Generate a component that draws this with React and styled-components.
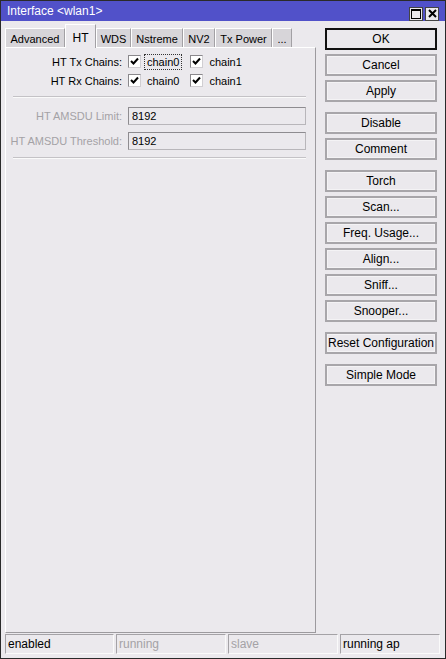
import React from 'react'
import styled, { createGlobalStyle } from 'styled-components'

const GlobalStyle = createGlobalStyle`
    html, body {
        margin: 0;
        padding: 0;
        background: #ebe9ed;
    }
    * {
        box-sizing: border-box;
    }
`

const Window = styled.div`
    width: 446px;
    height: 659px;
    display: flex;
    flex-direction: column;
    background: #ebe9ed;
    border: 1px solid #2a2a2a;
    font-family: "Liberation Sans", Arial, sans-serif;
    font-size: 11px;
    color: #000;
`

const TitleBar = styled.div`
    height: 20px;
    flex: none;
    display: flex;
    align-items: center;
    justify-content: space-between;
    padding: 0 6px 0 6px;
    background: #5151c9;
    color: #fff;
    font-size: 12px;
`

const TitleButtons = styled.div`
    display: flex;
    gap: 2px;
    padding-top: 5px;
`

const TitleButton = styled.div`
    width: 14px;
    height: 14px;
    display: flex;
    align-items: center;
    justify-content: center;
    background: #ebe9ed;
    border: 1px solid #444;
`

const Main = styled.div`
    flex: 1;
    display: flex;
    min-height: 0;
`

const LeftColumn = styled.div`
    width: 315px;
    display: flex;
    flex-direction: column;
    padding: 3px 0 0 4px;
`

const TabRow = styled.div`
    display: flex;
    align-items: flex-end;
    height: 23px;
    position: relative;
    z-index: 1;
`

const Tab = styled.div`
    height: ${p => (p.$active ? '24px' : '19px')};
    margin-bottom: ${p => (p.$active ? '-1px' : '0')};
    padding: ${p => (p.$active ? '3px 0 0' : '1px 0 0')};
    width: ${p => p.$w}px;
    display: flex;
    align-items: center;
    justify-content: center;
    background: ${p => (p.$active ? '#ebe9ed' : '#d7d5d9')};
    border-top: 1px solid #fff;
    border-left: 1px solid #fff;
    border-right: 1px solid #a2a0a4;
    font-size: ${p => (p.$active ? '12px' : '11px')};
`

const Panel = styled.div`
    flex: 1;
    border: 1px solid;
    border-color: #fff #9c9a9e #9c9a9e #fff;
    padding: 4px 0 0 0;
`

const FieldRow = styled.div`
    display: grid;
    grid-template-columns: 116px auto;
    column-gap: 6px;
    align-items: center;
    height: ${p => p.$h || 19}px;
    margin-bottom: ${p => p.$mb || 0}px;
`

const Label = styled.div`
    text-align: right;
    color: ${p => (p.$disabled ? '#a4a2a6' : '#000')};
    white-space: nowrap;
`

const Checks = styled.div`
    display: flex;
    align-items: center;
`

const CheckItem = styled.label`
    display: flex;
    align-items: center;
    margin-right: 8px;
`

const Box = styled.span`
    width: 13px;
    height: 13px;
    display: flex;
    align-items: center;
    justify-content: center;
    background: #fff;
    border: 1px solid;
    border-color: #8a888c #d0ced2 #d0ced2 #8a888c;
`

const CheckText = styled.span`
    margin-left: 3px;
    padding: 1px 2px;
    border: 1px dotted ${p => (p.$focus ? '#333' : 'transparent')};
`

const Separator = styled.div`
    height: 2px;
    margin: 0 9px 0 7px;
    border-top: 1px solid #c4c2c6;
    border-bottom: 1px solid #fafafa;
`

const Spacer = styled.div`
    height: ${p => p.$h}px;
`

const Input = styled.div`
    width: 178px;
    height: 18px;
    display: flex;
    align-items: center;
    padding-left: 3px;
    border: 1px solid;
    border-color: #8e8c90 #b8b6ba #b8b6ba #8e8c90;
    background: #ebe9ed;
    color: #000;
`

const RightColumn = styled.div`
    width: 112px;
    margin-left: 9px;
    padding-top: 7px;
    display: flex;
    flex-direction: column;
`

const ButtonGroup = styled.div`
    display: flex;
    flex-direction: column;
    gap: 4px;
    margin-bottom: 10px;
`

const Button = styled.button`
    width: 112px;
    height: 22px;
    padding: 0;
    font-family: inherit;
    font-size: 12px;
    color: #000;
    background: #ebe9ed;
    border: ${p => (p.$default ? '2px solid #111' : '2px solid #a8a6aa')};
    box-shadow: ${p => (p.$default ? 'none' : 'inset 0 0 0 1px #f4f3f5')};
    cursor: pointer;
`

const StatusBar = styled.div`
    flex: none;
    display: flex;
    gap: 2px;
    padding: 1px 0 4px 4px;
`

const StatusCell = styled.div`
    width: ${p => p.$w}px;
    height: 20px;
    display: flex;
    align-items: center;
    padding-left: 2px;
    border: 1px solid;
    border-color: #a4a2a6 #fafafa #fafafa #a4a2a6;
    color: ${p => (p.$muted ? '#a4a2a6' : '#000')};
    font-size: 12px;
`

const CheckMark = () => (
    <svg width="9" height="9" viewBox="0 0 9 9">
        <path d="M1 4 L3.5 6.5 L8 1.5" stroke="#000" strokeWidth="2" fill="none" />
    </svg>
)

const tabs = [
    { name: 'Advanced', w: 60 },
    { name: 'HT', w: 31, active: true },
    { name: 'WDS', w: 35 },
    { name: 'Nstreme', w: 52 },
    { name: 'NV2', w: 32 },
    { name: 'Tx Power', w: 57 },
    { name: '...', w: 20 },
]

const buttonGroups = [
    ['OK', 'Cancel', 'Apply'],
    ['Disable', 'Comment'],
    ['Torch', 'Scan...', 'Freq. Usage...', 'Align...', 'Sniff...', 'Snooper...'],
    ['Reset Configuration'],
    ['Simple Mode'],
]

const ChainChecks = ({ focused }) => (
    <Checks>
        <CheckItem><Box><CheckMark /></Box><CheckText $focus={focused}>chain0</CheckText></CheckItem>
        <CheckItem><Box><CheckMark /></Box><CheckText>chain1</CheckText></CheckItem>
    </Checks>
)

const App = () => {
    return (
        <>
            <GlobalStyle />
            <Window>
                <TitleBar>
                    <span>Interface &lt;wlan1&gt;</span>
                    <TitleButtons>
                        <TitleButton>
                            <svg width="10" height="10" viewBox="0 0 10 10">
                                <rect x="0.5" y="0.5" width="9" height="9" fill="none" stroke="#000" />
                                <line x1="0" y1="1.5" x2="10" y2="1.5" stroke="#000" strokeWidth="1" />
                            </svg>
                        </TitleButton>
                        <TitleButton>
                            <svg width="9" height="9" viewBox="0 0 9 9">
                                <path d="M1 1 L8 8 M8 1 L1 8" stroke="#000" strokeWidth="2" />
                            </svg>
                        </TitleButton>
                    </TitleButtons>
                </TitleBar>
                <Main>
                    <LeftColumn>
                        <TabRow>
                            {tabs.map(t => (
                                <Tab key={t.name} $w={t.w} $active={t.active}>{t.name}</Tab>
                            ))}
                        </TabRow>
                        <Panel>
                            <FieldRow>
                                <Label>HT Tx Chains:</Label>
                                <ChainChecks focused />
                            </FieldRow>
                            <FieldRow $mb={6}>
                                <Label>HT Rx Chains:</Label>
                                <ChainChecks />
                            </FieldRow>
                            <Separator />
                            <Spacer $h={5} />
                            <FieldRow $h={25}>
                                <Label $disabled>HT AMSDU Limit:</Label>
                                <Input>8192</Input>
                            </FieldRow>
                            <FieldRow $h={25} $mb={4}>
                                <Label $disabled>HT AMSDU Threshold:</Label>
                                <Input>8192</Input>
                            </FieldRow>
                            <Separator />
                        </Panel>
                    </LeftColumn>
                    <RightColumn>
                        {buttonGroups.map((group, i) => (
                            <ButtonGroup key={i}>
                                {group.map(b => (
                                    <Button key={b} $default={b === 'OK'}>{b}</Button>
                                ))}
                            </ButtonGroup>
                        ))}
                    </RightColumn>
                </Main>
                <StatusBar>
                    <StatusCell $w={109}>enabled</StatusCell>
                    <StatusCell $w={110} $muted>running</StatusCell>
                    <StatusCell $w={110} $muted>slave</StatusCell>
                    <StatusCell $w={100}>running ap</StatusCell>
                </StatusBar>
            </Window>
        </>
    )
}

export default App
